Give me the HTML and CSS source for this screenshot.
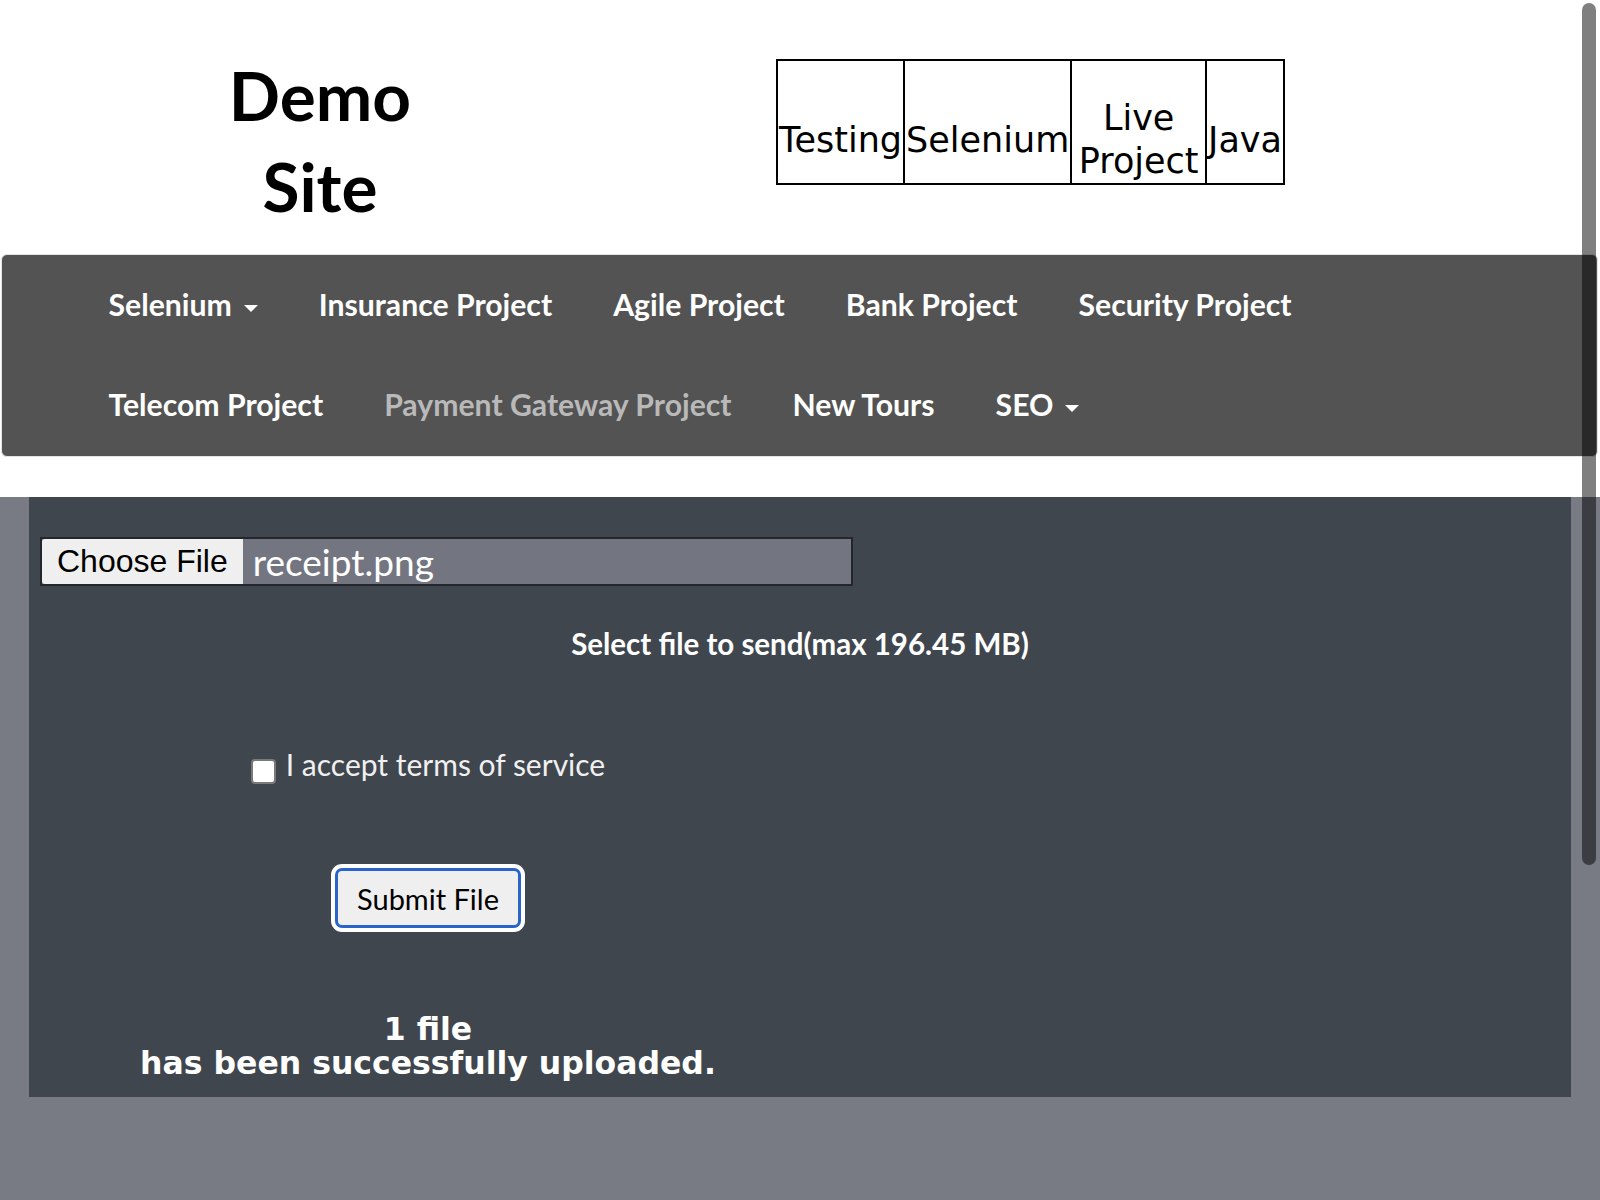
FILE: index.html
```html
<!DOCTYPE html>
<html lang="en">
<head>
<meta charset="utf-8">
<title>Demo Site - File Upload</title>
<link rel="stylesheet" href="styles.css">
</head>
<body>
<div class="site-head">
  <header class="top">
    <div class="brand"><h1 class="brand-title">Demo Site</h1></div>
    <table class="topics">
      <tr>
        <td>Testing</td>
        <td>Selenium</td>
        <td>Live Project</td>
        <td>Java</td>
      </tr>
    </table>
  </header>
  <nav class="navbar">
    <ul class="nav-list">
      <li><a class="nav-link" href="#">Selenium<span class="caret"></span></a></li>
      <li><a class="nav-link" href="#">Insurance Project</a></li>
      <li><a class="nav-link" href="#">Agile Project</a></li>
      <li><a class="nav-link" href="#">Bank Project</a></li>
      <li><a class="nav-link" href="#">Security Project</a></li>
      <li><a class="nav-link" href="#">Telecom Project</a></li>
      <li><a class="nav-link nav-link-muted" href="#">Payment Gateway Project</a></li>
      <li><a class="nav-link" href="#">New Tours</a></li>
      <li><a class="nav-link" href="#">SEO<span class="caret"></span></a></li>
    </ul>
  </nav>
</div>
<main class="page">
  <section class="upload">
    <div class="file-field"><span class="file-btn">Choose File</span><span class="file-name">receipt.png</span></div>
    <p class="hint">Select file to send(max 196.45 MB)</p>
    <div class="form-col">
      <label class="terms"><span class="box"></span>I accept terms of service</label>
      <button class="submit" type="button">Submit File</button>
      <h3 class="result">1 file<br>has been successfully uploaded.</h3>
    </div>
  </section>
</main>
<div class="scrollbar"></div>
</body>
</html>
```
FILE: styles.css
```css
html, body {
  margin: 0;
  padding: 0;
}
body {
  background: #787b84;
  font-family: Lato, "Open Sans", sans-serif;
  position: relative;
  min-height: 1200px;
}
.site-head {
  background: #fff;
  padding-bottom: 40px;
}
.top {
  display: flex;
  align-items: flex-start;
  height: 254px;
}
.brand {
  width: 640px;
  display: flex;
  justify-content: center;
  padding-top: 49px;
}
.brand-title {
  margin: 0;
  width: 230px;
  text-align: center;
  font-family: Lato, sans-serif;
  font-weight: 700;
  font-size: 67.5px;
  line-height: 91px;
  color: #000;
}
.topics {
  margin-top: 59px;
  margin-left: 136px;
  width: 509px;
  border-collapse: collapse;
  font-family: "DejaVu Sans", Verdana, sans-serif;
  font-size: 35px;
  line-height: 43px;
  color: #000;
}
.topics td {
  border: 2px solid #000;
  padding: 36px 1px 0;
  vertical-align: middle;
  text-align: center;
}
.navbar {
  margin: 0 2px 0 1px;
  background: #535353;
  border: 1px solid #e4e4e4;
  border-radius: 6px;
  padding: 0 77px 1px 76px;
}
.nav-list {
  list-style: none;
  margin: 0;
  padding: 0;
  display: flex;
  flex-wrap: wrap;
}
.nav-link {
  display: block;
  padding: 29px 30.5px 31px;
  font-family: Lato, sans-serif;
  font-weight: 700;
  font-size: 30.2px;
  line-height: 40px;
  color: #fff;
  text-decoration: none;
}
.nav-link-muted {
  color: #b9b9b9;
}
.caret {
  display: inline-block;
  width: 0;
  height: 0;
  border-top: 7px solid #fff;
  border-left: 7px solid transparent;
  border-right: 7px solid transparent;
  margin-left: 12px;
  vertical-align: middle;
}
.page {
  padding: 0 29px;
}
.upload {
  background: #3f464e;
  padding: 40px 11px 17px;
}
.file-field {
  width: 813px;
  height: 49px;
  box-sizing: border-box;
  border: 2px solid #23272c;
  background: #737681;
  display: flex;
  align-items: center;
}
.file-btn {
  align-self: stretch;
  display: flex;
  align-items: center;
  background: #efefef;
  padding: 0 15px 0 15px;
  border-radius: 3px 0 0 3px;
  font-family: "Liberation Sans", Arial, sans-serif;
  font-size: 32px;
  color: #000;
}
.file-name {
  margin-left: 10px;
  font-family: Lato, sans-serif;
  font-size: 37px;
  color: #fff;
}
.hint {
  margin: 38px 0 0;
  text-align: center;
  font-family: Lato, sans-serif;
  font-weight: 700;
  font-size: 29.5px;
  line-height: 40px;
  color: #fff;
}
.form-col {
  width: 776px;
  display: flex;
  flex-direction: column;
  align-items: center;
}
.terms {
  display: flex;
  align-items: flex-start;
  margin-top: 80px;
  font-family: Lato, sans-serif;
  font-size: 30px;
  line-height: 40px;
  color: #f0f0f0;
}
.box {
  width: 25px;
  height: 25px;
  box-sizing: border-box;
  background: #fff;
  border: 2px solid #7a7a7a;
  border-radius: 4px;
  margin: 15px 10px 0 0;
}
.submit {
  margin-top: 84px;
  width: 186px;
  height: 60px;
  box-sizing: border-box;
  border: 3px solid #2b64c9;
  border-radius: 7px;
  background: #efefef;
  box-shadow: 0 0 0 4px #fff;
  font-family: Lato, sans-serif;
  font-size: 29px;
  color: #000;
  padding: 0;
}
.result {
  margin: 84px 0 0;
  text-align: center;
  font-family: "DejaVu Sans", Verdana, sans-serif;
  font-weight: 700;
  font-size: 31.5px;
  line-height: 34px;
  color: #fff;
}
.scrollbar {
  position: absolute;
  top: 3px;
  right: 4px;
  width: 14px;
  height: 862px;
  background: rgba(0, 0, 0, 0.5);
  border-radius: 7px;
}
```
